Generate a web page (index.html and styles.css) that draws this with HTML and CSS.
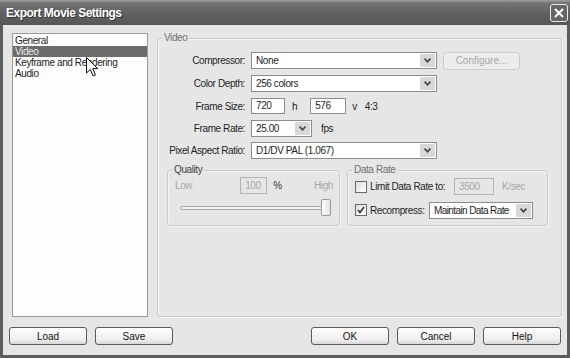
FILE: index.html
```html
<!DOCTYPE html>
<html lang="en">
<head>
  <meta charset="UTF-8" />
  <title>Export Movie Settings</title>
  <link rel="stylesheet" href="styles.css">
</head>
<body>

<div class="window">
  <div class="titlebar">
    <span class="title">Export Movie Settings</span>
    <span class="close">
      <svg width="10" height="10" viewBox="0 0 10 10"><path d="M1 1 L9 9 M9 1 L1 9" stroke="#fff" stroke-width="2"/></svg>
    </span>
  </div>

  <div class="frame">
    <div class="main">
      <ul class="list">
        <li>General</li>
        <li class="sel">Video</li>
        <li>Keyframe and Rendering</li>
        <li>Audio</li>
      </ul>

      <div class="panel group">
        <span class="legend">Video</span>
        <div class="form">
          <label>Compressor:</label>
          <div class="ctl">
            <div class="select w186"><span>None</span><i class="arrow"><svg width="7" height="5" viewBox="0 0 7 5"><path d="M0.6 0.6 L3.5 3.8 L6.4 0.6" fill="none" stroke="#444" stroke-width="1.6"/></svg></i></div>
            <button class="btn dis configure">Configure...</button>
          </div>

          <label>Color Depth:</label>
          <div class="ctl">
            <div class="select w186"><span>256 colors</span><i class="arrow"><svg width="7" height="5" viewBox="0 0 7 5"><path d="M0.6 0.6 L3.5 3.8 L6.4 0.6" fill="none" stroke="#444" stroke-width="1.6"/></svg></i></div>
          </div>

          <label>Frame Size:</label>
          <div class="ctl">
            <div class="input w34">720</div>
            <span class="unit-h">h</span>
            <div class="input w36">576</div>
            <span class="unit-v">v</span>
            <span class="ratio">4:3</span>
          </div>

          <label>Frame Rate:</label>
          <div class="ctl">
            <div class="select w61"><span>25.00</span><i class="arrow"><svg width="7" height="5" viewBox="0 0 7 5"><path d="M0.6 0.6 L3.5 3.8 L6.4 0.6" fill="none" stroke="#444" stroke-width="1.6"/></svg></i></div>
            <span class="fps">fps</span>
          </div>

          <label>Pixel Aspect Ratio:</label>
          <div class="ctl">
            <div class="select w186"><span>D1/DV PAL (1.067)</span><i class="arrow"><svg width="7" height="5" viewBox="0 0 7 5"><path d="M0.6 0.6 L3.5 3.8 L6.4 0.6" fill="none" stroke="#444" stroke-width="1.6"/></svg></i></div>
          </div>
        </div>

        <div class="boxes">
          <div class="group quality">
            <span class="legend dark">Quality</span>
            <div class="q-row">
              <span>Low</span>
              <div class="input dis w27">100</div>
              <span class="pct">%</span>
              <span class="high">High</span>
            </div>
            <div class="slider">
              <div class="track"></div>
              <div class="thumb"></div>
            </div>
          </div>

          <div class="group datarate">
            <span class="legend">Data Rate</span>
            <div class="d-row r1">
              <span class="check"></span>
              <span class="lim">Limit Data Rate to:</span>
              <div class="input dis w40">3500</div>
              <span class="ksec">K/sec</span>
            </div>
            <div class="d-row r2">
              <span class="check"><svg width="8" height="8" viewBox="0 0 8 8"><path d="M1 4 L3 6.5 L7 1" fill="none" stroke="#333" stroke-width="1.6"/></svg></span>
              <span class="rec">Recompress:</span>
              <div class="select w104 tight"><span>Maintain Data Rate</span><i class="arrow"><svg width="7" height="5" viewBox="0 0 7 5"><path d="M0.6 0.6 L3.5 3.8 L6.4 0.6" fill="none" stroke="#444" stroke-width="1.6"/></svg></i></div>
            </div>
          </div>
        </div>
      </div>
    </div>

    <div class="footer">
      <div class="btn-group">
        <button class="btn">Load</button>
        <button class="btn">Save</button>
      </div>
      <div class="btn-group">
        <button class="btn">OK</button>
        <button class="btn">Cancel</button>
        <button class="btn">Help</button>
      </div>
    </div>
  </div>

  <!-- mouse pointer over the list -->
  <svg class="cursor" width="13" height="21" viewBox="0 0 13 21">
    <path d="M0.5 0.5 L0.5 16 L4.3 12.4 L7 19 L9.4 18 L6.8 11.6 L11.6 11.6 Z" fill="#fff" stroke="#111" stroke-width="1"/>
  </svg>
</div>

</body>
</html>
```

FILE: styles.css
```css
* { box-sizing: border-box; }
body {
  margin: 0;
  font: 10px "Liberation Sans", Arial, sans-serif;
  letter-spacing: -0.4px;
  color: #1e1e1e;
  background: #e6e6e6;
}
.window { position: relative; width: 570px; height: 358px; display: flex; flex-direction: column; overflow: hidden; }

.titlebar {
  height: 25px; flex: none;
  display: flex; align-items: center; justify-content: space-between;
  padding: 0 2px 0 6px;
  background: linear-gradient(#a0a0a0 0, #757575 3px, #626262 50%, #565656 100%);
}
.title { color: #fff; font-weight: bold; font-size: 12px; letter-spacing: -0.5px; text-shadow: 1px 1px 0 #333; }
.close {
  width: 18px; height: 18px; margin-top: 1px;
  border: 1px solid #eaeaea; border-radius: 3px; background: #666;
  display: flex; align-items: center; justify-content: center;
}

.frame {
  flex: 1;
  border: 3px solid #5c5c5c; border-top: 0;
  padding: 8px 0 0 9px;
  display: flex; flex-direction: column;
}
.main { display: flex; align-items: flex-start; gap: 9px; height: 284px; }

.list {
  width: 136px; height: 284px; margin: 0; padding: 1px 0 0;
  list-style: none; background: #fdfdfd; border: 1px solid #9a9a9a;
}
.list li { height: 11px; line-height: 11px; padding-left: 2px; }
.list .sel { background: #6c6c6c; color: #e8e8e8; }

.group { border: 1px solid #c9c9c9; border-radius: 3px; box-shadow: inset 1px 1px 0 #f4f4f4, 1px 1px 0 #f4f4f4; }
.legend {
  display: block; width: max-content; height: 12px; line-height: 12px;
  margin: -7px 0 0 4px; padding: 0 2px;
  background: #e6e6e6; color: #707070;
}
.legend.dark { color: #444; }

.panel { width: 405px; height: 279px; margin-top: 5px; }
.form {
  display: grid;
  grid-template-columns: 87px auto;
  grid-template-rows: 17px 17px 16px 16px 16px;
  row-gap: 6px; column-gap: 6px;
  margin-top: 8px;
  align-items: center;
}
.form label { text-align: right; }
.ctl { display: flex; align-items: center; height: 100%; }

.select {
  display: flex; align-items: center; height: 17px;
  border: 1px solid #8c8c8c; background: #fff; padding-left: 4px;
}
.select span { flex: 1; white-space: nowrap; overflow: hidden; }
.select.tight { letter-spacing: -0.6px; }
.arrow {
  width: 15px; height: 13px; margin-right: 1px; flex: none;
  background: #d8d8d8; border-radius: 1px;
  display: flex; align-items: center; justify-content: center;
}
.input { height: 16px; line-height: 14px; border: 1px solid #8c8c8c; background: #fff; padding-left: 4px; }
.input.dis { height: 17px; line-height: 15px; background: #e6e6e6; border-color: #b4b4b4; color: #a8a8a8; }

.w27 { width: 27px; }
.w34 { width: 34px; }
.w36 { width: 36px; }
.w40 { width: 40px; }
.w61 { width: 61px; }
.w104 { width: 104px; }
.w186 { width: 186px; }

.unit-h { margin: 0 13px 0 7px; }
.unit-v { margin-left: 6px; }
.ratio { margin-left: 8px; }
.fps { margin-left: 9px; }

.btn {
  width: 78px; height: 18px; padding: 0;
  font: inherit; color: #111;
  border: 1px solid #5a5a5a; border-radius: 3px;
  background: linear-gradient(#fefefe, #eeeeee 75%, #d6d6d6);
}
.btn.dis { border-color: #cccccc; background: #ececec; color: #a8a8a8; }
.configure { width: 77px; margin-left: 6px; }

.boxes { display: flex; gap: 7px; margin: 12px 0 0 9px; }
.quality { width: 173px; height: 56px; }
.datarate { width: 201px; height: 56px; }

.q-row { display: flex; align-items: center; height: 17px; margin-top: 1px; padding: 0 6px 0 7px; color: #a6a6a6; }
.q-row .input { margin-left: 48px; }
.pct { margin-left: 6px; color: #333; }
.high { margin-left: auto; }
.slider { display: flex; align-items: center; height: 17px; margin-top: 5px; padding: 0 8px 0 12px; }
.track { flex: 1; height: 4px; border: 1px solid #a8a8a8; border-radius: 2px; background: #f4f4f4; }
.thumb {
  width: 10px; height: 17px; margin-left: -4px;
  border: 1px solid #9a9a9a; border-radius: 2px;
  background: linear-gradient(90deg, #fff, #e2e2e2);
}

.d-row { display: flex; align-items: center; padding-left: 7px; }
.d-row.r1 { height: 17px; margin-top: 2px; }
.d-row.r2 { height: 16px; margin-top: 7px; }
.check {
  width: 12px; height: 12px; margin-right: 3px;
  border: 1px solid #6a6a6a; background: linear-gradient(135deg, #dcdcdc, #fff);
  display: flex; align-items: center; justify-content: center;
}
.lim { width: 84px; }
.rec { width: 59px; }
.ksec { margin-left: 8px; color: #a8a8a8; }

.footer { display: flex; justify-content: space-between; margin: 10px 0 0 -3px; padding-right: 6px; }
.btn-group { display: flex; gap: 8px; }

.cursor { position: absolute; left: 86px; top: 57px; }
```
